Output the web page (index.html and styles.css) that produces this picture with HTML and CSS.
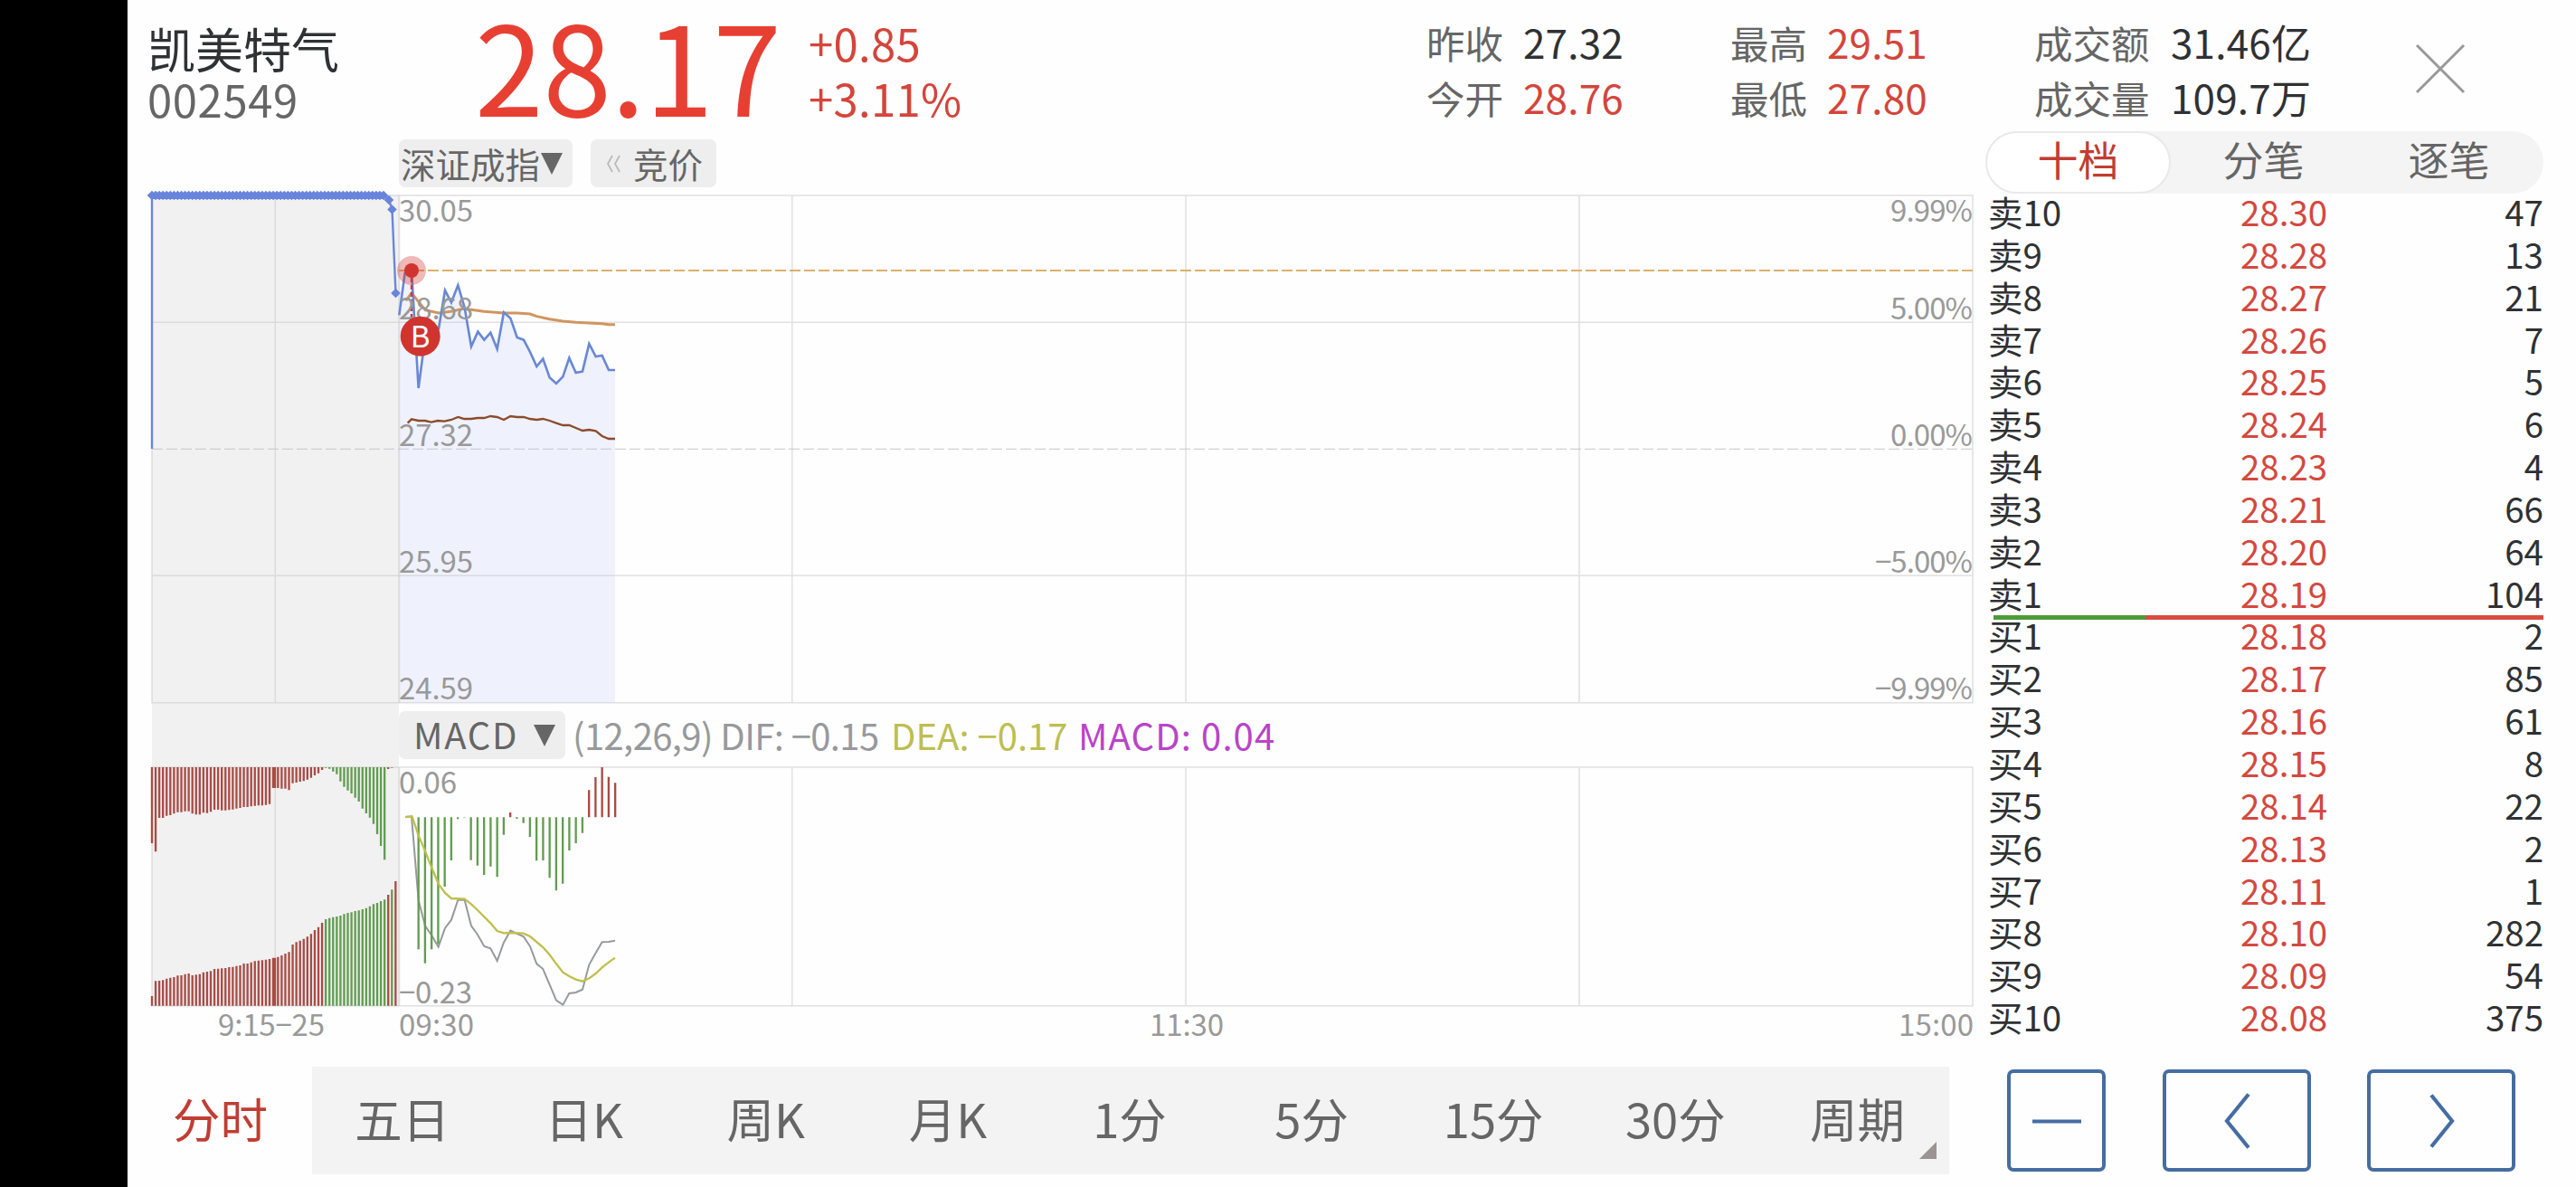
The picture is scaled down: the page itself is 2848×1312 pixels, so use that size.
FILE: index.html
```html
<!DOCTYPE html>
<html lang="zh-CN">
<head>
<meta charset="utf-8">
<title>凯美特气 002549</title>
<link rel="stylesheet" href="styles.css">
</head>
<body>
<div class="app">
  <header class="header">
    <div class="stock">
      <div class="stock-name">凯美特气</div>
      <div class="stock-code">002549</div>
    </div>
    <div class="price">28.17</div>
    <div class="change"><div>+0.85</div><div>+3.11%</div></div>
    <dl class="stats">
      <div><dt>昨收</dt><dd>27.32</dd></div>
      <div><dt>今开</dt><dd class="up">28.76</dd></div>
    </dl>
    <dl class="stats stats-range">
      <div><dt>最高</dt><dd class="up">29.51</dd></div>
      <div><dt>最低</dt><dd class="up">27.80</dd></div>
    </dl>
    <dl class="stats stats-total">
      <div><dt>成交额</dt><dd>31.46亿</dd></div>
      <div><dt>成交量</dt><dd>109.7万</dd></div>
    </dl>
    <svg class="close" width="56" height="56" viewBox="0 0 56 56"><path d="M2 2 54 54M54 2 2 54"/></svg>
  </header>

  <main class="main">
    <section class="charts">
      <div class="toolbar">
        <button class="chip chip-index">深证成指<i class="caret"></i></button>
        <button class="chip chip-auction"><svg width="16" height="20" viewBox="0 0 16 20"><path d="M7 1 2 10 7 19M15 1 10 10 15 19"/></svg>竞价</button>
      </div>

      <svg class="price-chart" width="2047" height="571" viewBox="141 207 2047 571">
        <rect class="pre-bg" x="168" y="216" width="273" height="562"/>
        <path class="area" transform="translate(430 200) scale(.33333)" d="M34 445 53 305 75 297 98 687 120 520 142 500 165 490 186 363 207 403 229 346 251 420 273 549 295 500 316 527 337 503 359 557 381 436 403 455 425 519 447 527 468 567 490 615 511 590 533 652 555 672 577 649 598 587 620 636 642 632 664 540 686 582 707 579 729 627 750 627V1730H34Z"/>
        <path class="grid" d="M168 216H2181V776.7H168ZM168 356.3H2181M168 636.3H2181M304.3 216V776.7M875.7 216V776.7M1311 216V776.7M1746 216V776.7"/>
        <path class="grid grid-open" d="M441.3 216V776.7"/>
        <path class="grid grid-zero" d="M168 496.3H2181"/>
        <path class="trade-level" d="M441 299H2181"/>
        <path class="line-price" d="M168 216V496"/>
        <path class="line-price" d="M425 216 430 221 433.5 231.5 437.5 324"/>
        <g id="auction-marks" class="marks"></g>
        <g transform="translate(430 200) scale(.33333)">
          <path class="line-avg" d="M56 397 75 372 98 400 120 428 165 438 205 433 245 424 272 427 315 433 381 438 425 438 468 441 490 449 533 458 577 465 620 469 664 471 707 473 729 476 750 476"/>
          <path class="line-now" d="M34 445 53 305 75 297 98 687 120 520 142 500 165 490 186 363 207 403 229 346 251 420 273 549 295 500 316 527 337 503 359 557 381 436 403 455 425 519 447 527 468 567 490 615 511 590 533 652 555 672 577 649 598 587 620 636 642 632 664 540 686 582 707 579 729 627 750 627"/>
          <path class="line-index" d="M62 803 75 790 98 795 120 795 140 800 162 795 184 797 207 792 229 783 250 789 272 789 294 786 316 786 337 780 359 783 381 792 403 780 425 783 447 783 468 789 490 792 511 789 533 795 555 803 577 810 598 810 620 819 642 828 664 825 686 829 707 846 729 855 750 855"/>
        </g>
        <path class="trade-link" d="M455 307V352"/>
        <circle class="trade-halo" cx="455" cy="299" r="16"/>
        <circle class="trade-dot" cx="455" cy="299" r="8"/>
        <g class="axis">
          <text x="441" y="244.7" textLength="82">30.05</text>
          <text x="441" y="352.5" textLength="82">28.68</text>
          <text x="441" y="492.5" textLength="82">27.32</text>
          <text x="441" y="632.7" textLength="82">25.95</text>
          <text x="441" y="773" textLength="82">24.59</text>
          <text x="2090" y="244.7" textLength="91">9.99%</text>
          <text x="2090" y="352.5" textLength="91">5.00%</text>
          <text x="2090" y="492.5" textLength="91">0.00%</text>
          <text x="2073" y="632.7" textLength="108">−5.00%</text>
          <text x="2073" y="773" textLength="108">−9.99%</text>
        </g>
        <circle class="trade-dot" cx="464.7" cy="371.7" r="22"/>
        <text class="trade-letter" x="464.7" y="383.5">B</text>
      </svg>

      <div class="legend">
        <div class="legend-pre"></div>
        <button class="chip chip-macd"><span>MACD</span><i class="caret"></i></button>
        <span class="legend-dif">(12,26,9) DIF: −0.15</span>
        <span class="legend-dea">DEA: −0.17</span>
        <span class="legend-macd">MACD: 0.04</span>
      </div>

      <svg class="macd-chart" width="2047" height="302" viewBox="141 847 2047 302">
        <rect class="pre-bg" x="168" y="847" width="273" height="265"/>
        <path class="grid" d="M168 848H2181V1111.7H168ZM304.3 848V1111.7M875.7 848V1111.7M1311 848V1111.7M1746 848V1111.7"/>
        <path class="grid grid-open" d="M441.3 848V1111.7"/>
        <g transform="translate(150 770) scale(.33333)">
          <path id="pre-red" class="bar-red"/>
          <path id="pre-green" class="bar-green"/>
        </g>
        <g transform="translate(430 770) scale(.33333)">
          <path class="line-dif" d="M55 399 75 397 98 675 120 760 142 792 164 830 186 768 207 740 229 674 251 674 273 760 294 789 316 828 337 835 359 876 381 815 403 776 425 786 446 795 468 828 490 886 511 903 533 955 555 1007 577 1022 598 984 620 981 642 971 664 889 686 850 707 814 729 813 750 809"/>
          <path id="macd-green" class="bar-green"/>
          <path id="macd-red" class="bar-red"/>
          <path class="line-dea" d="M55 399 77 398 98 460 120 512 142 568 165 622 186 651 207 669 251 671 273 688 294 708 337 751 359 777 381 784 403 783 446 785 468 795 511 831 533 856 555 886 577 914 598 927 620 938 642 944 664 934 686 918 707 898 729 881 750 866"/>
        </g>
        <g class="axis">
          <text x="441" y="876.5" textLength="64">0.06</text>
          <text x="441" y="1108.5" textLength="81">−0.23</text>
          <text x="241" y="1144.5" textLength="118">9:15−25</text>
          <text x="441" y="1144.5" textLength="83">09:30</text>
          <text x="1271" y="1144.5" textLength="82">11:30</text>
          <text x="2099" y="1144.5" textLength="83">15:00</text>
        </g>
      </svg>

      <nav class="periods">
        <a class="active">分时</a><a>五日</a><a>日K</a><a>周K</a><a>月K</a><a>1分</a><a>5分</a><a>15分</a><a>30分</a><a class="more">周期</a>
      </nav>
    </section>

    <aside class="side">
      <div class="tabs"><a class="active">十档</a><a>分笔</a><a>逐笔</a></div>
      <div class="book">
        <div class="row"><span>卖10</span><b>28.30</b><em>47</em></div>
        <div class="row"><span>卖9</span><b>28.28</b><em>13</em></div>
        <div class="row"><span>卖8</span><b>28.27</b><em>21</em></div>
        <div class="row"><span>卖7</span><b>28.26</b><em>7</em></div>
        <div class="row"><span>卖6</span><b>28.25</b><em>5</em></div>
        <div class="row"><span>卖5</span><b>28.24</b><em>6</em></div>
        <div class="row"><span>卖4</span><b>28.23</b><em>4</em></div>
        <div class="row"><span>卖3</span><b>28.21</b><em>66</em></div>
        <div class="row"><span>卖2</span><b>28.20</b><em>64</em></div>
        <div class="row"><span>卖1</span><b>28.19</b><em>104</em></div>
        <div class="row"><span>买1</span><b>28.18</b><em>2</em></div>
        <div class="row"><span>买2</span><b>28.17</b><em>85</em></div>
        <div class="row"><span>买3</span><b>28.16</b><em>61</em></div>
        <div class="row"><span>买4</span><b>28.15</b><em>8</em></div>
        <div class="row"><span>买5</span><b>28.14</b><em>22</em></div>
        <div class="row"><span>买6</span><b>28.13</b><em>2</em></div>
        <div class="row"><span>买7</span><b>28.11</b><em>1</em></div>
        <div class="row"><span>买8</span><b>28.10</b><em>282</em></div>
        <div class="row"><span>买9</span><b>28.09</b><em>54</em></div>
        <div class="row"><span>买10</span><b>28.08</b><em>375</em></div>
        <div class="ratio"><i style="width:27.6%"></i></div>
      </div>
      <div class="controls">
        <button class="control control-small"><svg width="56" height="64" viewBox="0 0 56 64"><path d="M1 32.5H55"/></svg></button>
        <button class="control"><svg width="56" height="64" viewBox="0 0 56 64"><path d="M41 2.5 17 32 41 61.5"/></svg></button>
        <button class="control"><svg width="56" height="64" viewBox="0 0 56 64"><path d="M17 3.5 40 32 17 60.5"/></svg></button>
      </div>
    </aside>
  </main>
</div>
<script src="chart.js"></script>
</body>
</html>
```

FILE: styles.css
```css
* { box-sizing: border-box; }

body {
  margin: 0;
  background: #fefefe;
  font-family: "Noto Sans CJK SC", sans-serif;
  color: #2f3133;
}

button { border: 0; padding: 0; font: inherit; color: inherit; }

.app {
  width: 2848px;
  height: 1312px;
  border-left: 141px solid #000;
  overflow: hidden;
}

/* Header */
.header { display: flex; height: 140px; }

.stock { width: 384px; padding: 26px 0 0 22px; line-height: 55px; }
.stock-name { font-size: 53px; }
.stock-code { font-size: 49px; letter-spacing: .6px; color: #666; }

.price {
  width: 369px;
  font-size: 136.5px;
  line-height: 140px;
  letter-spacing: -.5px;
  color: #e83f33;
}

.change {
  width: 683px;
  padding-top: 16px;
  font-size: 49px;
  line-height: 61px;
  letter-spacing: .3px;
  color: #d4453b;
}

.stats {
  width: 336px;
  margin: 0;
  padding-top: 16px;
  font-size: 44px;
  line-height: 61px;
}
.stats div { display: flex; }
.stats dt { width: 107px; font-size: 42.5px; color: #666; }
.stats dd { margin: 0; white-space: nowrap; letter-spacing: .2px; }
.stats-total { width: 383px; }
.stats-total dt { width: 151px; }
.up { color: #d4453b; }

.close { margin: 48px 0 0 38px; fill: none; stroke: #999; stroke-width: 3; }

/* Body */
.main { display: flex; height: 1172px; }
.charts { display: flex; flex-direction: column; width: 2047px; }
.charts > svg { display: block; flex: none; }

.toolbar { display: flex; gap: 20px; height: 67px; padding: 14px 0 0 300px; }
.chip {
  display: flex;
  align-items: center;
  height: 53px;
  border-radius: 7px;
  background: #eee;
  color: #666;
  font-size: 38.5px;
  line-height: 53px;
}
.chip-index { width: 192px; padding-left: 2px; gap: 1px; white-space: nowrap; }
.chip-auction { width: 139px; padding-left: 17px; gap: 14px; }
.chip-auction svg { fill: none; stroke: #bbb; stroke-width: 1.8; }
.caret {
  border: solid transparent;
  border-width: 24px 12px 0;
  border-top-color: #666;
}

.legend {
  display: flex;
  align-items: center;
  height: 69px;
  font-size: 40px;
  white-space: nowrap;
}
.legend-pre { width: 273px; height: 69px; margin-left: 27px; background: #f1f1f1; }
.legend span { position: relative; top: -1px; }
.chip-macd { width: 184px; padding-left: 16px; gap: 17px; font-size: 40px; letter-spacing: 1.7px; }
.legend-dif { width: 360px; padding-left: 8px; letter-spacing: -.6px; color: #97999c; }
.legend-dea { width: 207px; color: #bdbe51; }
.legend-macd { letter-spacing: 1.1px; color: #b944c8; }

/* Charts */
.pre-bg { fill: #f1f1f1; }
.area { fill: #eff2fc; }
.grid { fill: none; stroke: #c8c8c8; stroke-opacity: .55; stroke-width: 1.5; }
.grid-open { stroke-width: 2; }
.grid-zero { stroke: #c4c6c8; stroke-opacity: 1; stroke-width: 1; stroke-dasharray: 12 4; }
.trade-level { stroke: #dcb06c; stroke-width: 2; stroke-dasharray: 12 4; }
.line-price { fill: none; stroke: #6a88d6; stroke-width: 2.4; }
.line-now { fill: none; stroke: #6a88d6; stroke-width: 8; }
.line-avg { fill: none; stroke: #d0955f; stroke-width: 9; }
.line-index { fill: none; stroke: #8c4a2c; stroke-width: 7; }
.marks { fill: #6884dc; }
.trade-link { stroke: #c63a44; stroke-width: 2.4; stroke-dasharray: 5 3; }
.trade-halo { fill: #d0342e; fill-opacity: .34; }
.trade-dot { fill: #cf352e; }
.trade-letter { fill: #fff; font-size: 33px; text-anchor: middle; }
.axis { fill: #999; font-size: 33px; }
.bar-red { stroke: #aa4b46; stroke-width: 7; }
.bar-green { stroke: #619d51; stroke-width: 7; }
.line-dif { fill: none; stroke: #97999c; stroke-width: 6; }
.line-dea { fill: none; stroke: #bfc04c; stroke-width: 7; }

/* Period tabs */
.periods {
  display: flex;
  width: 2011px;
  height: 119px;
  margin: 30px 0 0 3px;
  background: #f3f3f3;
}
.periods a {
  flex: 1;
  padding-right: 2px;
  font-size: 52.5px;
  line-height: 113px;
  text-align: center;
  color: #666;
}
.periods .active { background: #fefefe; color: #c03d33; }
.periods .more { position: relative; }
.periods .more::after {
  content: "";
  position: absolute;
  right: 14px;
  bottom: 17px;
  border: solid transparent;
  border-width: 0 0 19px 19px;
  border-bottom-color: #9c9492;
}

/* Order book */
.side { width: 660px; padding: 5px 36px 0 7px; }
.tabs { display: flex; height: 69px; border-radius: 35px; background: #f4f4f4; }
.tabs a {
  flex: 0 0 205px;
  font-size: 45px;
  line-height: 62px;
  text-align: center;
  color: #666;
}
.tabs .active {
  border: 2px solid #e9e9e9;
  border-radius: 35px;
  background: #fff;
  line-height: 58px;
  color: #c03d33;
}

.book { position: relative; height: 937px; padding-left: 3px; }
.row {
  display: grid;
  grid-template-columns: 279px 1fr auto;
  height: 46.85px;
  font-size: 38.5px;
  line-height: 38px;
}
.row b { font-weight: 400; color: #d4483e; }
.row em { font-style: normal; }
.ratio {
  position: absolute;
  top: 466px;
  left: 9px;
  right: 0;
  height: 5px;
  background: #d84b40;
}
.ratio i { display: block; height: 5px; background: #4e9b37; }

.controls { display: flex; justify-content: space-between; margin: 31px 31px 0 24px; }
.control {
  display: flex;
  align-items: center;
  justify-content: center;
  width: 164px;
  height: 113px;
  border: 4px solid #466da2;
  border-radius: 7px;
  background: #fefefe;
}
.control-small { width: 109px; }
.control svg { fill: none; stroke: #466da2; stroke-width: 4.2; }
```

FILE: chart.js
```js
const PITCH = 12.19;

// Diamonds of the call-auction price line
const marks = [];
for (let x = 168; x <= 425; x += PITCH / 3) marks.push([x, 216]);
marks.push([430, 221], [433.5, 231.5], [437.5, 324]);
const markPath = document.createElementNS("http://www.w3.org/2000/svg", "path");
markPath.setAttribute("d", marks.map(([x, y]) => `M${x - 5.3} ${y}l5.3-5.3 5.3 5.3-5.3 5.3z`).join(""));
document.getElementById("auction-marks").append(markPath);

// Call-auction bars: unmatched volume hangs from the top, matched volume stands on the base
const xs = [];
for (let k = 0; k < 33; k++) xs.push(54 + k * PITCH);
xs.push(456, 462);
for (let k = 0; k < 33; k++) xs.push(472 + k * PITCH);

const unmatched = [486,514,402,402,395,393,388,383,383,380,380,388,391,391,385,386,382,375,375,377,377,376,374,371,369,366,366,364,362,361,361,359,356,303,303,
  303,305,305,310,287,285,282,280,275,269,261,254,243,236,239,248,257,281,299,311,321,335,348,371,387,401,422,456,495,541,240,236,234];
const matched = [993,943,942,940,935,932,930,925,924,920,918,924,922,920,914,912,910,903,902,901,900,897,896,893,891,885,885,881,877,875,874,872,870,866,866,
  863,858,852,847,822,814,809,803,796,787,774,764,750,738,734,731,729,726,721,717,715,711,709,705,701,695,688,684,678,673,657,640,612];
const isGreen = i => (i >= 48 && i <= 64) || i === 66;

let red = "", green = "";
xs.forEach((x, i) => {
  const d = `M${x} 234V${unmatched[i]}M${x} 1025V${matched[i]}`;
  if (isGreen(i)) green += d; else red += d;
});
document.getElementById("pre-red").setAttribute("d", red);
document.getElementById("pre-green").setAttribute("d", green);

// MACD histogram around the zero level
const ZERO = 400;
const macd = [838,884,838,820,630,543,406,401,542,560,591,563,598,458,384,405,419,465,544,543,601,643,620,510,486,452,310,267,234,266,286];
let up = "", down = "";
macd.forEach((y, i) => {
  const d = `M${98 + i * 21.75} ${ZERO}V${y}`;
  if (y < ZERO) up += d; else down += d;
});
document.getElementById("macd-red").setAttribute("d", up);
document.getElementById("macd-green").setAttribute("d", down);
```
